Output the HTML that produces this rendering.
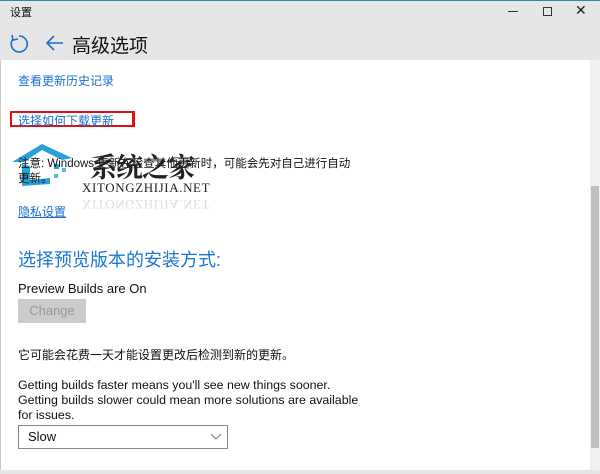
<!DOCTYPE html>
<html><head><meta charset="utf-8"><style>
*{margin:0;padding:0;box-sizing:border-box}
body{width:600px;height:474px;background:#fff;position:relative;overflow:hidden;font-family:"Liberation Sans","Noto Sans CJK SC",sans-serif;color:#111}
.a{position:absolute;white-space:nowrap}
.hdr{position:absolute;left:0;top:0;width:600px;height:60px;background:#e6e6e6;border-top:1px solid #2a8ea8}
.blue{color:#1a6fd0}
</style></head><body>
<div class="hdr"></div>
<div class="a" style="left:10px;top:4px;font-size:11px">设置</div>
<div class="a" style="left:508px;top:11px;width:10px;height:1px;background:#333"></div>
<div class="a" style="left:543px;top:7px;width:9px;height:9px;border:1px solid #333"></div>
<div class="a" style="left:575px;top:2px;font-size:14px;color:#222">✕</div>
<svg class="a" style="left:8px;top:33px" width="22" height="22" viewBox="0 0 22 22"><path d="M5 6 A8 8 0 1 0 11 3" fill="none" stroke="#1a6fd0" stroke-width="1.6"/><path d="M4 2 L5 7 L10 6" fill="none" stroke="#1a6fd0" stroke-width="1.6"/></svg>
<svg class="a" style="left:45px;top:34px" width="20" height="18" viewBox="0 0 20 18"><path d="M2 9 H18 M9 2 L2 9 L9 16" fill="none" stroke="#1a6fd0" stroke-width="1.6"/></svg>
<div class="a" style="left:72px;top:31px;font-size:19px;color:#111">高级选项</div>
<div class="a" style="left:0;top:60px;width:1px;height:414px;background:#ccc"></div>
<div class="a" style="left:590px;top:60px;width:10px;height:410px;background:#f0f0f0"></div>
<div class="a" style="left:591px;top:186px;width:8px;height:262px;background:#c0c0c0"></div>
<div class="a" style="left:0;top:470px;width:600px;height:4px;background:#e6e6e6"></div>
<div class="a blue" style="left:18px;top:72px;font-size:12px">查看更新历史记录</div>
<div class="a" style="left:10px;top:111px;width:125px;height:16px;border:2px solid #e01010;border-right-width:3px"></div>
<div class="a blue" style="left:18px;top:112px;font-size:12px">选择如何下载更新</div>
<svg class="a" style="left:10px;top:142px" width="80" height="48" viewBox="0 0 80 48"><path d="M2 20 L32 2 L62 16 L52 18 L32 8 L14 20 Z" fill="#2aa0d8"/><path d="M12 22 L12 44 L40 42 L40 36 L20 38 L20 24 Z" fill="#2aa0d8"/><rect x="44" y="22" width="5" height="5" fill="#2aa0d8"/><rect x="52" y="26" width="4" height="4" fill="#5ab8e0"/><rect x="44" y="32" width="4" height="4" fill="#5ab8e0"/></svg>
<div class="a" style="left:18px;top:155px;font-size:11.5px">注意: Windows 更新在检查其他更新时，可能会先对自己进行自动</div>
<div class="a" style="left:18px;top:170px;font-size:11.5px">更新。</div>
<div class="a" style="left:90px;top:146px;font-size:27px;font-weight:bold;color:#222;font-family:'Noto Serif CJK SC',serif;letter-spacing:-1px">系统之家</div>
<div class="a" style="left:82px;top:180px;font-size:13px;color:#222;font-family:'Liberation Serif',serif;letter-spacing:0.6px">XITONGZHIJIA.NET</div>
<div class="a" style="left:82px;top:196px;font-size:13px;color:#ddd;font-family:'Liberation Serif',serif;letter-spacing:0.6px;transform:scaleY(-1)">XITONGZHIJIA.NET</div>
<div class="a blue" style="left:18px;top:203px;font-size:12px;text-decoration:underline">隐私设置</div>
<div class="a" style="left:18px;top:246px;font-size:18px;color:#1a78d4">选择预览版本的安装方式:</div>
<div class="a" style="left:18px;top:281px;font-size:13px">Preview Builds are On</div>
<div class="a" style="left:18px;top:299px;width:68px;height:24px;background:#ccc;color:#999;font-size:13px;text-align:center;line-height:24px">Change</div>
<div class="a" style="left:18px;top:346px;font-size:12px">它可能会花费一天才能设置更改后检测到新的更新。</div>
<div class="a" style="left:18px;top:378px;font-size:12.4px;line-height:15px;white-space:normal;width:345px"><span style="white-space:nowrap">Getting builds faster means you'll see new things sooner.</span><br><span style="white-space:nowrap">Getting builds slower could mean more solutions are available</span><br>for issues.</div>
<div class="a" style="left:18px;top:425px;width:210px;height:24px;border:1px solid #888;font-size:13px;line-height:22px;padding-left:9px">Slow</div>
<svg class="a" style="left:210px;top:433px" width="12" height="8"><path d="M1 1 L6 6 L11 1" fill="none" stroke="#777"/></svg>
</body></html>
